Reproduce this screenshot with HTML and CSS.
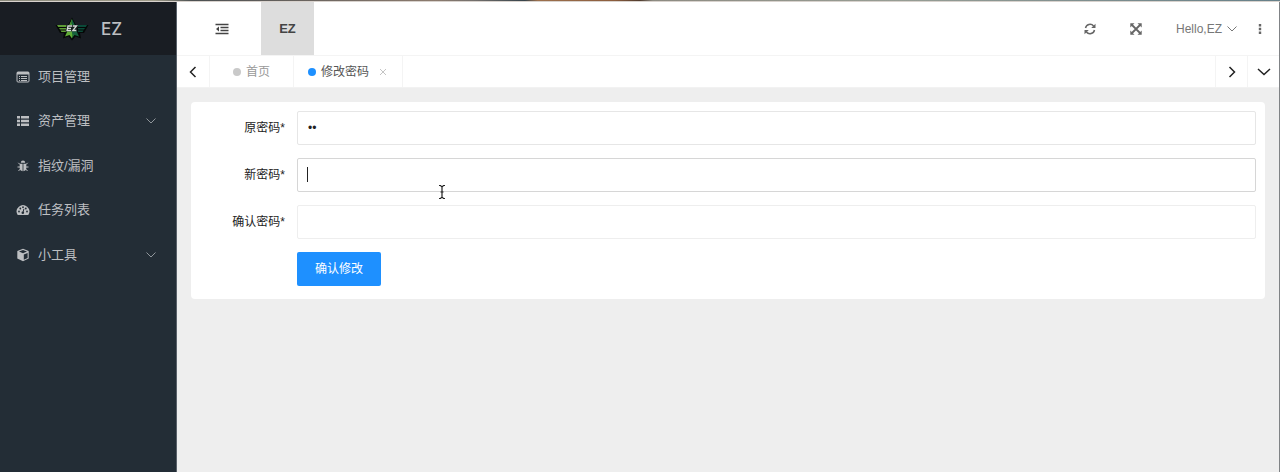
FILE: index.html
```html
<!DOCTYPE html>
<html lang="zh-CN">
<head>
<meta charset="utf-8">
<title>EZ</title>
<link rel="stylesheet" href="styles.css">
</head>
<body>
<div class="backdrop"></div>
<div class="app">
  <aside class="sidebar">
    <a class="brand" href="#">
      <svg class="logo" viewBox="0 0 36 24" aria-hidden="true">
        <path d="M18 0.500l4 7.500h12.500l-4.500 8h-4l1 5.500-5.500-2-3.500 4-3.500-4-5.500 2 1-5.500H6l-4.500-8H14z" fill="#050807"/>
        <path d="M3 8h9.500v2H4.200zM5 11h7v1.500H6zM6.500 13.500H12V15H7.500z" fill="#5e9c36"/>
        <path d="M33 8h-9.500v2h8.300zM31 11h-7v1.500h6zM29.500 13.500H24V15h4.500z" fill="#0b4a39"/>
        <path d="M18 2l-3 6.500-2 .5v6l-2 4.500 4.500-1.500 2.500 3.500z" fill="#5fac35"/>
        <path d="M18 2l3 6.500 2 .5v6l2 4.500-4.500-1.500L18 21z" fill="#16613d"/>
        <path d="M18 2v5l-2 1zM18 16v5l2-3z" fill="#2b7630"/>
        <path d="M13 8h11l-1.500 6.500h-11z" fill="#15201e"/>
        <path d="M18 9h-4l-1 4.500h4M13.500 11.300h3.500M18.800 9h3.700l-3.700 4.500h3.500" fill="none" stroke="#d4d9d6" stroke-width="1.300"/>
      </svg>
      <span>EZ</span>
    </a>
    <nav class="menu">
      <a href="#"><svg class="icon" viewBox="0 0 14 14"><rect x="1" y="2" width="12" height="10" rx="1" fill="none" stroke="currentColor"/><path d="M1 2h12v2.500H1z" fill="currentColor"/><path d="M3 6.500h1M5 6.500h6M3 8.500h1M5 8.500h6M3 10.500h1M5 10.500h6" stroke="currentColor"/></svg><span>项目管理</span></a>
      <a href="#"><svg class="icon" viewBox="0 0 14 14"><path d="M1 2h3v2.600H1zM5 2h8v2.600H5zM1 5.700h3v2.600H1zM5 5.700h8v2.600H5zM1 9.400h3V12H1zM5 9.400h8V12H5z" fill="currentColor"/></svg><span>资产管理</span><svg class="chevron" viewBox="0 0 10 6"><path d="M.5.500L5 5l4.500-4.500"/></svg></a>
      <a href="#"><svg class="icon" viewBox="0 0 14 14"><path d="M4.800 3.800a2.200 2.200 0 0 1 4.400 0zM3.700 4.700h2.900v7.500C4.800 12 3.700 10.800 3.700 9zM7.400 4.700h2.900V9c0 1.800-1.100 3-2.900 3.200z" fill="currentColor"/><path d="M4 5.500L2.300 3.800M10 5.500l1.700-1.700M4 8H1.500M10 8h2.500M4.300 10L2.500 12M9.700 10l1.800 2" stroke="currentColor" fill="none"/></svg><span>指纹/漏洞</span></a>
      <a href="#"><svg class="icon" viewBox="0 0 14 14"><path d="M1.700 12a6.300 6.300 0 1 1 10.600 0z" fill="currentColor"/><g fill="#232d36"><circle cx="3" cy="8.500" r=".9"/><circle cx="4.300" cy="5.500" r=".9"/><circle cx="7" cy="4.200" r=".9"/><circle cx="9.800" cy="5.500" r=".9"/><circle cx="11" cy="8.500" r=".9"/><circle cx="6.800" cy="9.800" r="1.300"/></g><path d="M6.900 9.800l1-4" stroke="#232d36"/></svg><span>任务列表</span></a>
      <a href="#"><svg class="icon" viewBox="0 0 14 14"><path d="M7 .8l5.700 2.300v7.400L7 13.300l-5.700-2.800V3.100z" fill="currentColor"/><path d="M3 3.600l4-1.500 4 1.500-4 1.600zM7.800 6.500l3.800-1.600v5L7.800 11.800z" fill="#232d36"/></svg><span>小工具</span><svg class="chevron" viewBox="0 0 10 6"><path d="M.5.500L5 5l4.500-4.500"/></svg></a>
    </nav>
  </aside>
  <div class="main">
    <header class="topbar">
      <button class="fold" aria-label="收起菜单"><svg width="14" height="12" viewBox="0 0 14 12"><path d="M.5 1.500h13M5.500 4.500h8M5.500 7.500h8M.5 10.500h13" stroke="currentColor" stroke-width="1.500"/><path d="M4 3.500v5L1 6z" fill="currentColor"/></svg></button>
      <a class="module" href="#">EZ</a>
      <div class="tools">
        <button aria-label="刷新"><svg width="12" height="12" viewBox="0 0 12 12"><path d="M1.500 5A4.600 4.600 0 0 1 9.600 3M10.500 7A4.600 4.600 0 0 1 2.400 9" fill="none" stroke="currentColor" stroke-width="1.500"/><path d="M11.500.7V5H7.200zM.5 11.300V7h4.300z" fill="currentColor"/></svg></button>
        <button aria-label="全屏"><svg width="12" height="12" viewBox="0 0 12 12"><path d="M2 2l8 8M10 2l-8 8" stroke="currentColor" stroke-width="1.800"/><path d="M.3.300h4.200L.3 4.500zM11.700.300H7.500l4.200 4.200zM.3 11.700h4.200L.3 7.500zM11.700 11.700H7.500l4.200-4.200z" fill="currentColor"/></svg></button>
        <button class="user">Hello,EZ <svg class="chevron" viewBox="0 0 10 6"><path d="M.5.500L5 5l4.500-4.500"/></svg></button>
        <button aria-label="更多"><svg width="4" height="12" viewBox="0 0 4 12"><path d="M.8 1h2.400v2.400H.8zM.8 4.800h2.400v2.400H.8zM.8 8.600h2.400V11H.8z" fill="currentColor"/></svg></button>
      </div>
    </header>
    <div class="tabs">
      <button class="arrow prev" aria-label="向左"><svg width="8" height="12" viewBox="0 0 8 12"><path d="M6.500 1L1.500 6l5 5"/></svg></button>
      <a class="tab home" href="#"><i class="dot"></i>首页</a>
      <a class="tab active" href="#"><i class="dot"></i>修改密码<svg class="close" viewBox="0 0 8 8"><path d="M1 1l6 6M7 1L1 7"/></svg></a>
      <button class="arrow next" aria-label="向右"><svg width="8" height="12" viewBox="0 0 8 12"><path d="M1.500 1l5 5-5 5"/></svg></button>
      <button class="arrow" aria-label="标签操作"><svg width="14" height="8" viewBox="0 0 14 8"><path d="M1 1l6 5.500L13 1"/></svg></button>
    </div>
    <main class="content">
      <form class="card">
        <div class="row">
          <label for="old">原密码*</label>
          <div class="field"><input id="old" type="password" value="ez"></div>
        </div>
        <div class="row">
          <label for="new">新密码*</label>
          <div class="field current"><input id="new" type="password"><span class="caret"></span>
            <svg class="pointer" viewBox="0 0 8 16"><path d="M1 1.500h1.500L4 3l1.500-1.500H7M4 3v10M1 14.500h1.500L4 13l1.500 1.500H7M2.500 8h3" fill="none" stroke="#222" stroke-width="1.200"/></svg>
          </div>
        </div>
        <div class="row">
          <label for="again">确认密码*</label>
          <div class="field"><input id="again" class="faint" type="password"></div>
        </div>
        <div class="row">
          <span></span>
          <button class="submit" type="button">确认修改</button>
        </div>
      </form>
    </main>
  </div>
</div>
</body>
</html>
```
FILE: styles.css
```css
* { box-sizing: border-box; }

body {
  display: flex;
  flex-direction: column;
  min-height: 100vh;
  margin: 0;
  background: #eee;
  color: #222;
  font: 12px/20px "Liberation Sans", "Noto Sans CJK SC", sans-serif;
}

a { color: inherit; text-decoration: none; }

button {
  padding: 0;
  border: 0;
  background: none;
  color: inherit;
  font: inherit;
}

svg { display: block; flex: none; }

.backdrop {
  height: 2px;
  border-bottom: 1px solid #d8d2cd;
  background: linear-gradient(90deg, #8b8a7c 0%, #a09d8a 12%, #4c5052 15%, #8c7b6e 34%, #74706d 37%, #36434b 41%, #9c704d 42%, #8c5d3d 48%, #4f3b2e 50%, #8d8b82 51%, #979d94 70%, #668089 100%);
}

.app {
  display: flex;
  flex: 1;
  border-right: 1px solid #808386;
}

.sidebar {
  flex: none;
  width: 177px;
  border-right: 1px solid #59616a;
  background: #232d36;
  color: #bdbfc2;
}

.brand {
  display: flex;
  align-items: center;
  justify-content: center;
  gap: 11px;
  height: 53px;
  background: #191d23;
  font-family: Inter, "Liberation Sans", sans-serif;
  font-size: 17px;
  font-weight: 500;
}

.logo { width: 36px; height: 24px; }

.menu { font-size: 13px; }

.menu a {
  display: flex;
  align-items: center;
  gap: 8px;
  height: 44px;
  padding: 0 20px 0 16px;
}

.menu a:nth-child(even) { margin-bottom: 1px; }

.icon { width: 14px; height: 14px; }

.chevron {
  width: 10px;
  height: 6px;
  fill: none;
  stroke: currentColor;
}

.menu .chevron { margin-left: auto; color: #90969b; }

.main { flex: 1; min-width: 0; }

.topbar {
  display: flex;
  align-items: stretch;
  height: 54px;
  border-bottom: 1px solid #f4f4f4;
  background: #fff;
  color: #444;
}

.fold { width: 84px; padding-left: 38px; }

.module {
  display: flex;
  align-items: center;
  justify-content: center;
  width: 53px;
  background: #ddd;
  font-size: 13px;
  font-weight: bold;
}

.tools {
  display: flex;
  align-items: center;
  gap: 34px;
  margin-left: auto;
  padding-right: 17px;
  color: #666;
}

.user {
  display: flex;
  align-items: center;
  gap: 5px;
  margin-right: -13px;
  color: #777;
}

.tabs {
  display: flex;
  height: 32px;
  border-bottom: 1px solid #f2f2f2;
  background: #fff;
}

.arrow {
  display: flex;
  align-items: center;
  justify-content: center;
  width: 32px;
  border-left: 1px solid #f4f4f4;
}

.arrow svg { fill: none; stroke: #222; stroke-width: 1.5; }

.prev { border-left: 0; }

.next { margin-left: auto; }

.tab {
  display: flex;
  align-items: center;
  gap: 5px;
  padding: 0 15px 0 14px;
  border-right: 1px solid #f4f4f4;
  color: #555;
}

.home { padding: 0 23px; border-left: 1px solid #f4f4f4; color: #999; }

.dot {
  width: 8px;
  height: 8px;
  border-radius: 50%;
  background: #c9c9c9;
}

.active .dot { background: #1e90ff; }

.close {
  width: 8px;
  height: 8px;
  margin-left: 5px;
  fill: none;
  stroke: #c4c4c4;
}

.content { padding: 14px; }

.card {
  display: grid;
  gap: 13px;
  padding: 9px 9px 13px;
  border-radius: 4px;
  background: #fff;
}

.row {
  display: grid;
  grid-template-columns: 85px 1fr;
  gap: 12px;
  align-items: center;
}

.row label { text-align: right; white-space: nowrap; }

.field { position: relative; }

.field input {
  display: block;
  width: 100%;
  height: 34px;
  padding: 0 10px;
  border: 1px solid #e6e6e6;
  border-radius: 2px;
  outline: 0;
  background: #fff;
  color: #222;
  font: inherit;
}

.current input { border-color: #d6d6d6; }

.field .faint { border-color: #eee; }

.caret {
  position: absolute;
  top: 9px;
  left: 10px;
  width: 1px;
  height: 15px;
  background: #222;
}

.pointer {
  position: absolute;
  top: 26px;
  left: 141px;
  width: 8px;
  height: 16px;
}

.submit {
  justify-self: start;
  height: 34px;
  padding: 0 18px;
  border-radius: 2px;
  background: #1e90ff;
  color: #fff;
}
```
